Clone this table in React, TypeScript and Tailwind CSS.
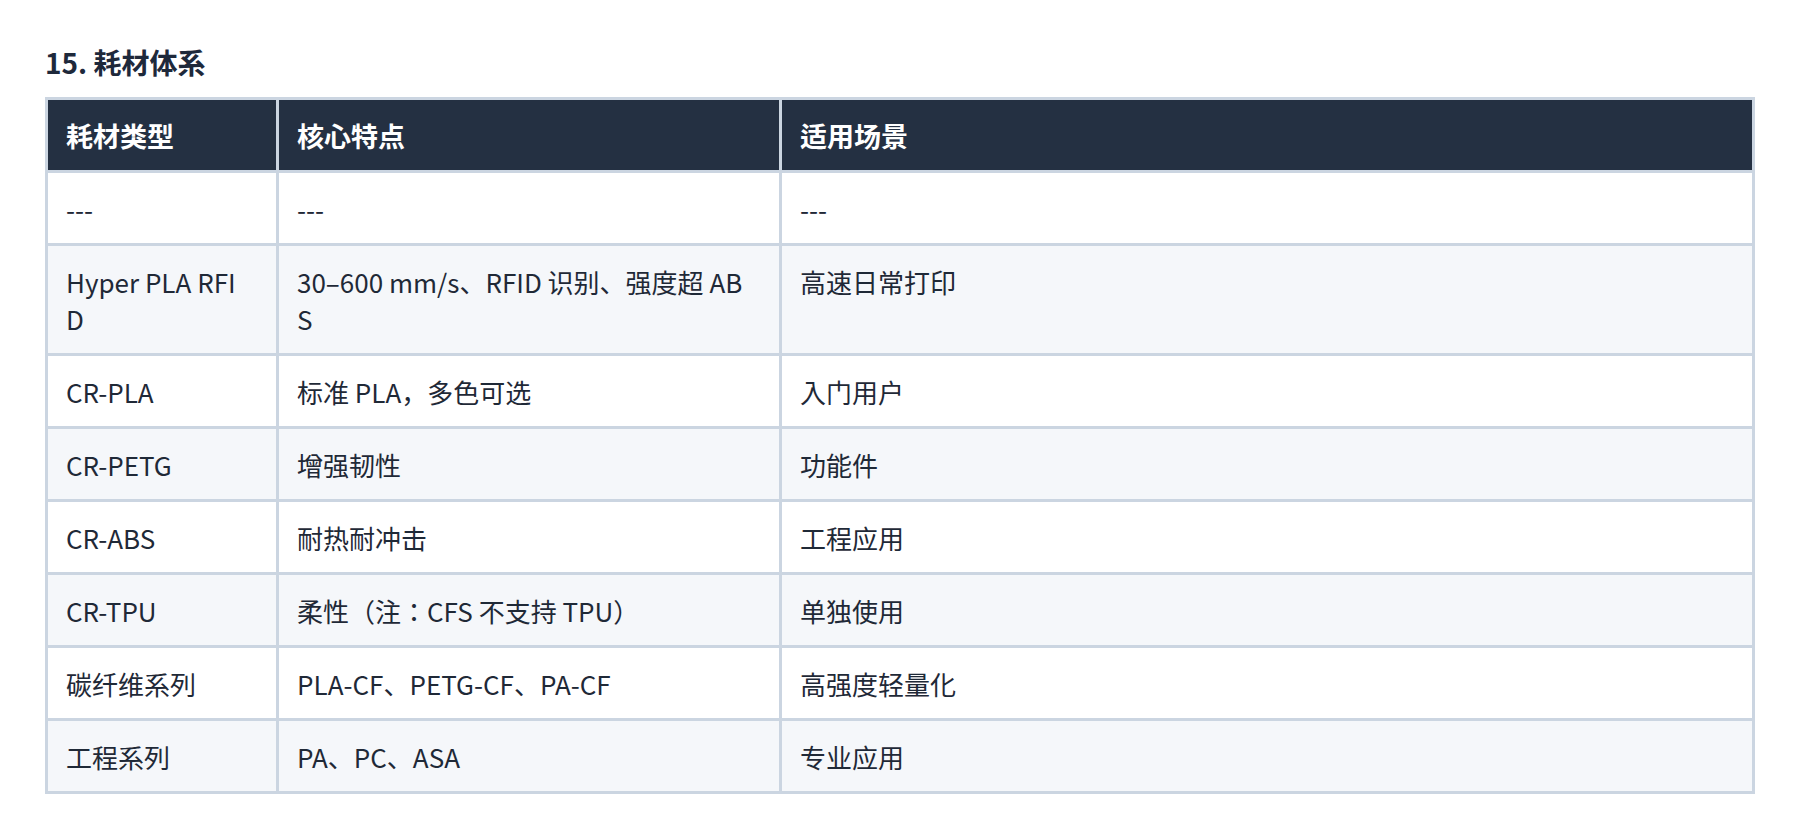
import React from "react";

const rows: [string, string, string][] = [
  ["---", "---", "---"],
  ["Hyper PLA RFID", "30–600 mm/s、RFID 识别、强度超 ABS", "高速日常打印"],
  ["CR-PLA", "标准 PLA，多色可选", "入门用户"],
  ["CR-PETG", "增强韧性", "功能件"],
  ["CR-ABS", "耐热耐冲击", "工程应用"],
  ["CR-TPU", "柔性（注：CFS 不支持 TPU）", "单独使用"],
  ["碳纤维系列", "PLA-CF、PETG-CF、PA-CF", "高强度轻量化"],
  ["工程系列", "PA、PC、ASA", "专业应用"],
];

export default function App() {
  return (
    <div
      className="min-h-[836px] bg-white px-[45px] pt-[41px] text-[#1f2937]"
      style={{ fontFamily: '"Noto Sans CJK JP", "Noto Sans CJK SC", "Noto Sans", sans-serif' }}
    >
      <h2 className="mb-[14px] text-[28px] font-bold leading-[42px] text-[#1e293b]">
        15. 耗材体系
      </h2>
      <table className="w-full table-fixed border-collapse border-[3px] border-[#cbd5e1] text-[26px] leading-[37px]">
        <colgroup>
          <col className="w-[231px]" />
          <col className="w-[503px]" />
          <col />
        </colgroup>
        <thead>
          <tr className="bg-[#243042] text-[27px] text-white">
            <th className="border-[3px] border-[#cbd5e1] pb-[16px] pl-[18px] pr-[30px] pt-[17px] text-left font-bold">
              耗材类型
            </th>
            <th className="border-[3px] border-[#cbd5e1] pb-[16px] pl-[18px] pr-[30px] pt-[17px] text-left font-bold">
              核心特点
            </th>
            <th className="border-[3px] border-[#cbd5e1] pb-[16px] pl-[18px] pr-[30px] pt-[17px] text-left font-bold">
              适用场景
            </th>
          </tr>
        </thead>
        <tbody>
          {rows.map((r, i) => (
            <tr key={i} className={i % 2 === 1 ? "bg-[#f5f7fa]" : "bg-white"}>
              {r.map((c, j) => (
                <td
                  key={j}
                  className="break-all border-[3px] border-[#cbd5e1] pb-[16px] pl-[18px] pr-[30px] pt-[17px] align-top"
                >
                  {c}
                </td>
              ))}
            </tr>
          ))}
        </tbody>
      </table>
    </div>
  );
}
